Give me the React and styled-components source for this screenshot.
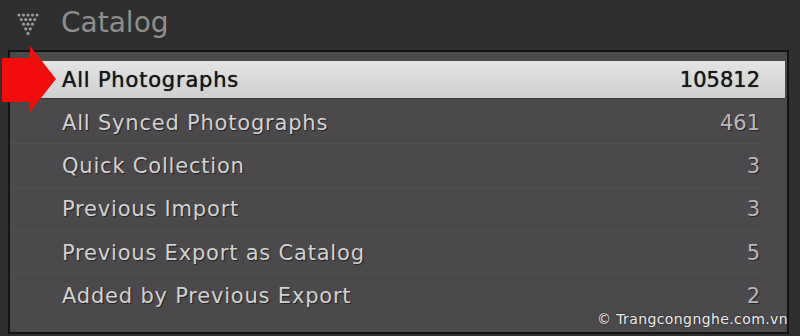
import React from 'react';
import styled, { createGlobalStyle } from 'styled-components';

const GlobalStyle = createGlobalStyle`
  html, body {
    margin: 0;
    padding: 0;
    background: #2f2f2f;
  }
  body {
    font-family: "DejaVu Sans", Verdana, sans-serif;
  }
`;

const Page = styled.div`
  position: relative;
  width: 800px;
  height: 336px;
  overflow: hidden;
  background: #2f2f2f;
`;

const Header = styled.div`
  display: flex;
  align-items: center;
  height: 50px;
  padding-left: 17px;
  gap: 22px;
`;

const Title = styled.div`
  font-size: 28px;
  color: #8e8e8e;
  line-height: 1;
  margin-top: -4px;
`;

const Panel = styled.div`
  margin-left: 8px;
  width: 777px;
  height: 271px;
  background: #4b494c;
  border: 2px solid #141414;
  padding-top: 9px;
  display: flex;
  flex-direction: column;
`;

const Row = styled.div`
  display: flex;
  align-items: center;
  justify-content: space-between;
  height: ${p => (p.selected ? '37px' : '43.3px')};
  margin-bottom: ${p => (p.selected ? '2px' : '0')};
  padding: 0 25px 0 52px;
  margin-right: 2px;
  font-size: 21px;
  letter-spacing: 0.8px;
  color: ${p => (p.selected ? '#181818' : '#d2d2d2')};
  text-shadow: ${p => (p.selected ? '0 0 0.7px #181818' : '1px 1px 1px rgba(0,0,0,0.55)')};
  background: ${p => (p.selected ? 'linear-gradient(#e4e4e4, #cfcfcf)' : 'transparent')};
  border-bottom: ${p => (p.selected ? '1px solid #3a393b' : 'none')};
  position: relative;

  &::after {
    content: '';
    display: ${p => (p.selected || p.last ? 'none' : 'block')};
    position: absolute;
    left: 0;
    right: 20px;
    bottom: 0;
    height: 1px;
    background: rgba(255, 255, 255, 0.035);
  }
`;

const Count = styled.span`
  letter-spacing: 0;
  color: ${p => (p.selected ? '#181818' : '#b9b9b9')};
`;

const Pointer = styled.svg`
  position: absolute;
  left: 2px;
  top: 46px;
`;

const Watermark = styled.div`
  position: absolute;
  right: 12px;
  bottom: 9px;
  font-family: "DejaVu Sans", sans-serif;
  font-size: 14px;
  letter-spacing: 0.4px;
  color: #ececec;
  text-shadow: 0 0 2px rgba(0,0,0,0.6);
`;

const items = [
  ['All Photographs', '105812'],
  ['All Synced Photographs', '461'],
  ['Quick Collection', '3'],
  ['Previous Import', '3'],
  ['Previous Export as Catalog', '5'],
  ['Added by Previous Export', '2'],
];

function DotTriangle() {
  const dots = [];
  for (let r = 0; r < 5; r++) {
    for (let c = 0; c < 5 - r; c++) {
      dots.push(<circle key={r + '-' + c} cx={2 + r * 2.25 + c * 4.5} cy={2 + r * 4.6} r="1.6" fill="#9a9a9a" />);
    }
  }
  return (
    <svg width="22" height="24" viewBox="0 0 22 24">
      {dots}
    </svg>
  );
}

export default function App() {
  return (
    <Page>
      <GlobalStyle />
      <Header>
        <DotTriangle />
        <Title>Catalog</Title>
      </Header>
      <Panel>
        {items.map(([label, n], i) => (
          <Row key={label} selected={i === 0} last={i === items.length - 1}>
            <span>{label}</span>
            <Count selected={i === 0}>{n}</Count>
          </Row>
        ))}
      </Panel>
      <Pointer width="56" height="68" viewBox="0 0 56 68">
        <polygon points="0,12 28,12 28,0 54,33 28,66 28,56 0,56" fill="#f40d0d" />
      </Pointer>
      <Watermark>© Trangcongnghe.com.vn</Watermark>
    </Page>
  );
}
